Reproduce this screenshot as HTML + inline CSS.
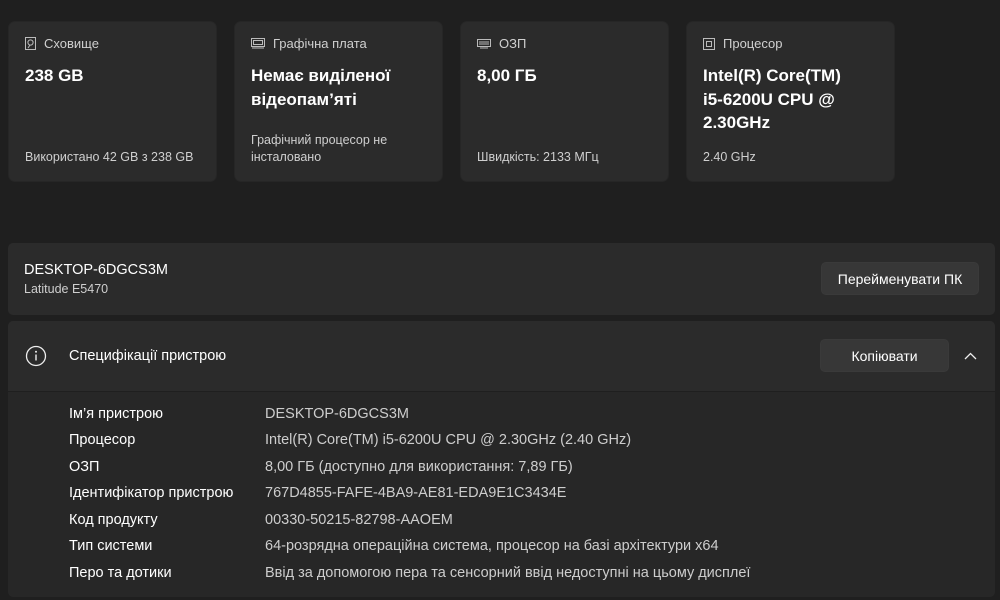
<!DOCTYPE html>
<html><head><meta charset="utf-8"><style>
*{margin:0;padding:0;box-sizing:border-box}
body{width:1000px;height:600px;background:#1f1f1f;font-family:"Liberation Sans","Noto Sans CJK SC",sans-serif;color:#fff;position:relative;overflow:hidden}
.card{position:absolute;top:21px;width:209px;height:161px;background:#2b2b2b;border-radius:7px;border:1px solid #262626}
.card .t{position:absolute;left:16px;top:14px;font-size:13px;color:#d0d0d0;display:flex;align-items:center;gap:8px}
.card .v{position:absolute;left:16px;top:42px;font-size:17px;font-weight:bold;line-height:23.5px;width:185px}
.card .s{position:absolute;left:16px;bottom:15px;font-size:12.5px;color:#cfcfcf;line-height:17px;width:185px}
.panel{position:absolute;left:8px;width:987px;background:#2b2b2b;border-radius:5px}
.btn{position:absolute;background:#373737;border-radius:5px;border:1px solid #3a3a3a;font-size:14px;display:flex;align-items:center;justify-content:center;color:#fff}
.row{position:absolute;left:69px;font-size:14.5px;color:#fff}
.val{position:absolute;left:265px;font-size:14.5px;color:#cdcdcd}
</style></head><body>
<div class="card" style="left:8px"><div class="t"><svg width="11" height="13" viewBox="0 0 11 13"><rect x=".5" y=".5" width="10" height="12" fill="none" stroke="#bbb"/><circle cx="5.5" cy="5.5" r="2.6" fill="none" stroke="#bbb"/><path d="M3 11l2-3" stroke="#bbb"/></svg>Сховище</div><div class="v">238 GB</div><div class="s">Використано 42 GB з 238 GB</div></div>
<div class="card" style="left:234px"><div class="t"><svg width="14" height="11" viewBox="0 0 14 11"><rect x=".5" y=".5" width="13" height="8" fill="none" stroke="#bbb"/><rect x="2.5" y="2.5" width="9" height="4" fill="none" stroke="#bbb"/><path d="M1 10h12" stroke="#bbb"/></svg>Графічна плата</div><div class="v">Немає виділеної відеопам’яті</div><div class="s">Графічний процесор не інсталовано</div></div>
<div class="card" style="left:460px"><div class="t"><svg width="14" height="10" viewBox="0 0 14 10"><rect x=".5" y=".5" width="13" height="7" fill="none" stroke="#bbb"/><path d="M2 3h10M2 5h10M3 9h8" stroke="#bbb"/></svg>ОЗП</div><div class="v">8,00 ГБ</div><div class="s">Швидкість: 2133 МГц</div></div>
<div class="card" style="left:686px"><div class="t"><svg width="12" height="12" viewBox="0 0 12 12"><rect x=".5" y=".5" width="11" height="11" fill="none" stroke="#bbb"/><rect x="3.5" y="3.5" width="5" height="5" fill="none" stroke="#bbb"/></svg>Процесор</div><div class="v" style="width:150px">Intel(R) Core(TM) i5-6200U CPU @ 2.30GHz</div><div class="s">2.40 GHz</div></div>

<div class="panel" style="top:243px;height:72px">
<div style="position:absolute;left:16px;top:19px;font-size:14.5px">DESKTOP-6DGCS3M</div>
<div style="position:absolute;left:16px;top:39px;font-size:12.5px;color:#cfcfcf">Latitude E5470</div>
</div>
<div class="btn" style="left:821px;top:262px;width:158px;height:33px">Перейменувати ПК</div>

<div class="panel" style="top:321px;height:276px;background:#272727">
<div style="position:absolute;left:0;top:0;width:987px;height:71px;background:#2b2b2b;border-radius:5px 5px 0 0;border-bottom:1px solid #1f1f1f"></div>
</div>
<svg style="position:absolute;left:25px;top:345px" width="22" height="22" viewBox="0 0 22 22"><circle cx="11" cy="11" r="9.5" fill="none" stroke="#eee" stroke-width="1.3"/><circle cx="11" cy="6.8" r="1" fill="#eee"/><path d="M11 9.5v6" stroke="#eee" stroke-width="1.4"/></svg>
<div style="position:absolute;left:69px;top:348px;font-size:14.5px">Специфікації пристрою</div>
<div class="btn" style="left:820px;top:339px;width:129px;height:33px">Копіювати</div>
<svg style="position:absolute;left:964px;top:352px" width="13" height="8" viewBox="0 0 13 8"><path d="M1 7l5.5-5.5L12 7" fill="none" stroke="#eee" stroke-width="1.3"/></svg>

<div class="row" style="top:406px">Ім’я пристрою</div><div class="val" style="top:406px">DESKTOP-6DGCS3M</div>
<div class="row" style="top:432px">Процесор</div><div class="val" style="top:432px">Intel(R) Core(TM) i5-6200U CPU @ 2.30GHz (2.40 GHz)</div>
<div class="row" style="top:459px">ОЗП</div><div class="val" style="top:459px">8,00 ГБ (доступно для використання: 7,89 ГБ)</div>
<div class="row" style="top:485px">Ідентифікатор пристрою</div><div class="val" style="top:485px">767D4855-FAFE-4BA9-AE81-EDA9E1C3434E</div>
<div class="row" style="top:512px">Код продукту</div><div class="val" style="top:512px">00330-50215-82798-AAOEM</div>
<div class="row" style="top:538px">Тип системи</div><div class="val" style="top:538px">64-розрядна операційна система, процесор на базі архітектури x64</div>
<div class="row" style="top:565px">Перо та дотики</div><div class="val" style="top:565px">Ввід за допомогою пера та сенсорний ввід недоступні на цьому дисплеї</div>
</body></html>
